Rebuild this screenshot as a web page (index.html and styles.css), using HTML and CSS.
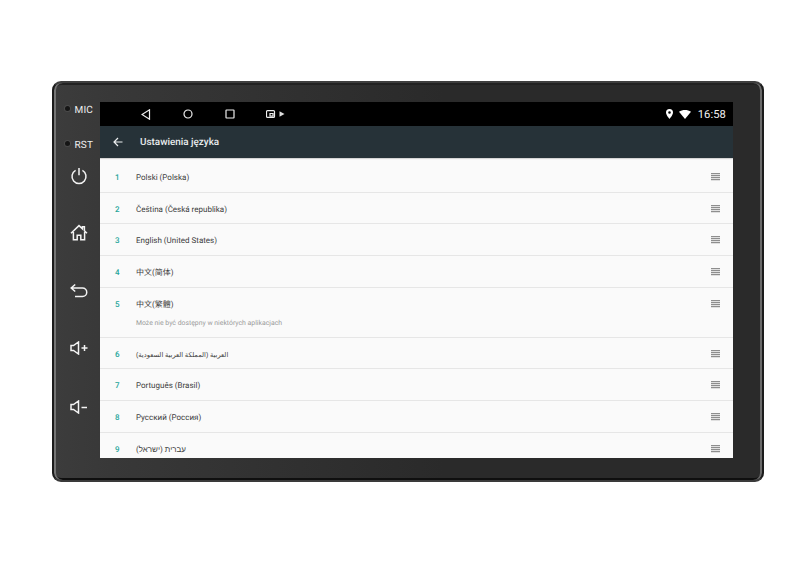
FILE: index.html
```html
<!DOCTYPE html>
<html lang="pl">
<head>
<meta charset="utf-8">
<title>Ustawienia języka</title>
<link rel="stylesheet" href="styles.css">
</head>
<body>
<div class="device">
  <aside class="side">
    <div class="label label-mic"><span class="dot"></span><span>MIC</span></div>
    <div class="label label-rst"><span class="dot"></span><span>RST</span></div>
    <svg class="hw hw-power" width="18" height="18" viewBox="0 0 18 18"><path d="M5.600 3.400A7 7 0 1 0 12.400 3.400M9 1v7.200"/></svg>
    <svg class="hw hw-home" width="18" height="18" viewBox="0 0 18 18"><path d="M1 9.200 9 1.600l3.400 3.200V2.800h2v3.900L17 9.200M3.400 8v7.800h3.800v-4.600h3.600v4.600h3.800V8"/></svg>
    <svg class="hw hw-back" width="18" height="16" viewBox="0 0 18 16"><path d="M5.200 1.500 1.200 5l4 3.500M1.200 5h11.300a3.900 3.900 0 0 1 0 8.500H5"/></svg>
    <svg class="hw hw-vup" width="18" height="14" viewBox="0 0 18 14"><path d="M1 4.500v5h2.500l5 3.500V1L3.500 4.500zM11.500 7h6M14.500 4v6"/></svg>
    <svg class="hw hw-vdown" width="18" height="14" viewBox="0 0 18 14"><path d="M1 4.500v5h2.500l5 3.500V1L3.500 4.500zM11.500 7.500h5.500"/></svg>
  </aside>
  <main class="screen">
    <div class="statusbar">
      <div class="nav">
        <svg class="nav-back" width="10" height="11" viewBox="0 0 10 11"><path d="M8.500.8v9.400L1 5.500z"/></svg>
        <svg class="nav-home" width="10" height="10" viewBox="0 0 10 10"><circle cx="5" cy="5" r="4"/></svg>
        <svg class="nav-recent" width="10" height="10" viewBox="0 0 10 10"><rect x="1" y="1" width="8" height="8" rx=".5"/></svg>
        <svg class="nav-pip" width="20" height="8" viewBox="0 0 20 8"><path d="M6 .6H1.500a1 1 0 0 0-1 1v4.800a1 1 0 0 0 1 1h6a1 1 0 0 0 1-1V1.600a1 1 0 0 0-1-1H6M4 3.500h3v2.500H4z"/><path class="fill" d="M13.500 1.200v5.600L18.500 4z"/></svg>
      </div>
      <div class="status-right">
        <svg width="7" height="10" viewBox="0 0 7 10"><path class="fill" fill-rule="evenodd" d="M3.500 0A3.500 3.500 0 0 0 0 3.500C0 6 3.500 10 3.500 10S7 6 7 3.500A3.500 3.500 0 0 0 3.500 0zm0 2.200a1.300 1.300 0 1 1 0 2.600 1.300 1.300 0 0 1 0-2.600z"/></svg>
        <svg width="12" height="9" viewBox="0 0 12 9"><path class="fill" d="M0 1.800C3.500-.6 8.500-.6 12 1.800L6 9z"/></svg>
        <span class="clock">16:58</span>
      </div>
    </div>
    <header class="toolbar">
      <svg width="10" height="10" viewBox="0 0 10 10"><path d="M5 1 1 5l4 4M1 5h8.500"/></svg>
      <h1>Ustawienia języka</h1>
    </header>
    <ol class="list">
      <li class="row"><span class="num">1</span><span class="name">Polski (Polska)</span><i class="handle"></i></li>
      <li class="row"><span class="num">2</span><span class="name">Čeština (Česká republika)</span><i class="handle"></i></li>
      <li class="row"><span class="num">3</span><span class="name">English (United States)</span><i class="handle"></i></li>
      <li class="row"><span class="num">4</span><span class="name">中文(简体)</span><i class="handle"></i></li>
      <li class="row row-tall"><span class="num">5</span><span class="name">中文(繁體)<small>Może nie być dostępny w niektórych aplikacjach</small></span><i class="handle"></i></li>
      <li class="row"><span class="num">6</span><span class="name name-small">العربية (المملكة العربية السعودية)</span><i class="handle"></i></li>
      <li class="row"><span class="num">7</span><span class="name">Português (Brasil)</span><i class="handle"></i></li>
      <li class="row"><span class="num">8</span><span class="name">Русский (Россия)</span><i class="handle"></i></li>
      <li class="row"><span class="num">9</span><span class="name">עברית (ישראל)</span><i class="handle"></i></li>
    </ol>
  </main>
</div>
</body>
</html>
```
FILE: styles.css
```css
* { box-sizing: border-box; }
html, body { margin: 0; height: 100%; background: #fff; overflow: hidden; }
body { padding: 81px 44px 0 52px; font-family: Roboto, "Noto Sans CJK SC", sans-serif; text-rendering: geometricPrecision; }
.device {
  width: 712px;
  height: 401px;
  display: flex;
  padding: 19px 29px 22px 0;
  border: 2px solid #1c1c1c;
  border-top-color: #3f3f3f;
  border-bottom-color: #3a3a3a;
  border-radius: 9px;
  background: linear-gradient(90deg, #3c3c3c 0, #383838 8%, #2a2a2a 55%);
  box-shadow: inset 2px 0 0 #757575, inset -2px 0 0 #6a6a6a, inset 0 -2px 0 #0f0f0f, inset 0 2px 0 #222;
}
.side {
  position: relative;
  width: 46px;
  flex: none;
  color: #eee;
  display: flex;
  flex-direction: column;
  align-items: center;
}
.label { display: flex; align-items: center; gap: 5px; font-size: 10px; line-height: 14px; width: 34px; margin-left: 9px; letter-spacing: .2px; }
.label-mic { margin-top: 2px; }
.label-rst { margin-top: 21px; }
.dot { width: 5px; height: 5px; border-radius: 50%; background: #151515; box-shadow: 0 0 0 1px #4a4a4a; flex: none; margin-top: -6px; }
.hw { fill: none; stroke: #f4f4f4; stroke-width: 1.500; flex: none; margin-left: 4px; }
.hw-power { margin-top: 14px; }
.hw-home { margin-top: 39px; }
.hw-back { margin-top: 41px; }
.hw-vup { margin-top: 42px; }
.hw-vdown { margin-top: 45px; }
.screen { width: 633px; height: 356px; display: flex; flex-direction: column; overflow: hidden; background: #fafafa; }
.statusbar { height: 24px; flex: none; background: #000; color: #fff; display: flex; align-items: center; justify-content: space-between; padding: 0 7px 0 41px; }
.nav { display: flex; align-items: center; }
.nav svg { fill: none; stroke: #eee; stroke-width: 1.200; }
.nav .fill { fill: #ddd; stroke: none; }
.nav-home { margin-left: 32px; }
.nav-recent { margin-left: 32px; }
.nav-pip { margin-left: 31px; }
.status-right { display: flex; align-items: center; }
.status-right .fill { fill: #fff; }
.status-right svg + svg { margin-left: 6px; }
.clock { font-size: 11.200px; margin-left: 7px; letter-spacing: .1px; color: #f2f2f2; }
.toolbar { height: 32px; flex: none; background: #263238; color: #e9eced; display: flex; align-items: center; padding-left: 13px; box-shadow: 0 1px 1px rgba(0,0,0,.15); position: relative; }
.toolbar svg { fill: none; stroke: #eceff0; stroke-width: 1.200; flex: none; }
.toolbar h1 { margin: 0 0 0 17px; font-size: 9.900px; font-weight: 500; }
.list { margin: 0; padding: 3px 0 0; list-style: none; flex: 1; overflow: hidden; }
.row { height: 31.700px; display: flex; align-items: flex-start; padding-top: 10px; border-bottom: 1px solid #e6e6e6; position: relative; }
.row-tall { height: 50px; }
.num { width: 36px; padding-left: 15px; flex: none; font-size: 8px; line-height: 13px; color: #26a69a; font-weight: 500; }
.name { flex: 1; font-size: 8px; line-height: 14px; color: #3c3c3c; }
.name-small { font-size: 6.700px; }
.name small { display: block; margin-top: 5px; font-size: 6.870px; line-height: 12px; color: #9a9a9a; }
.handle { width: 9px; height: 8px; margin: 2px 13px 0 0; flex: none; background: repeating-linear-gradient(180deg, #8e8e8e 0, #8e8e8e 1px, #e0e0e0 1px, #e0e0e0 2px); }
```
